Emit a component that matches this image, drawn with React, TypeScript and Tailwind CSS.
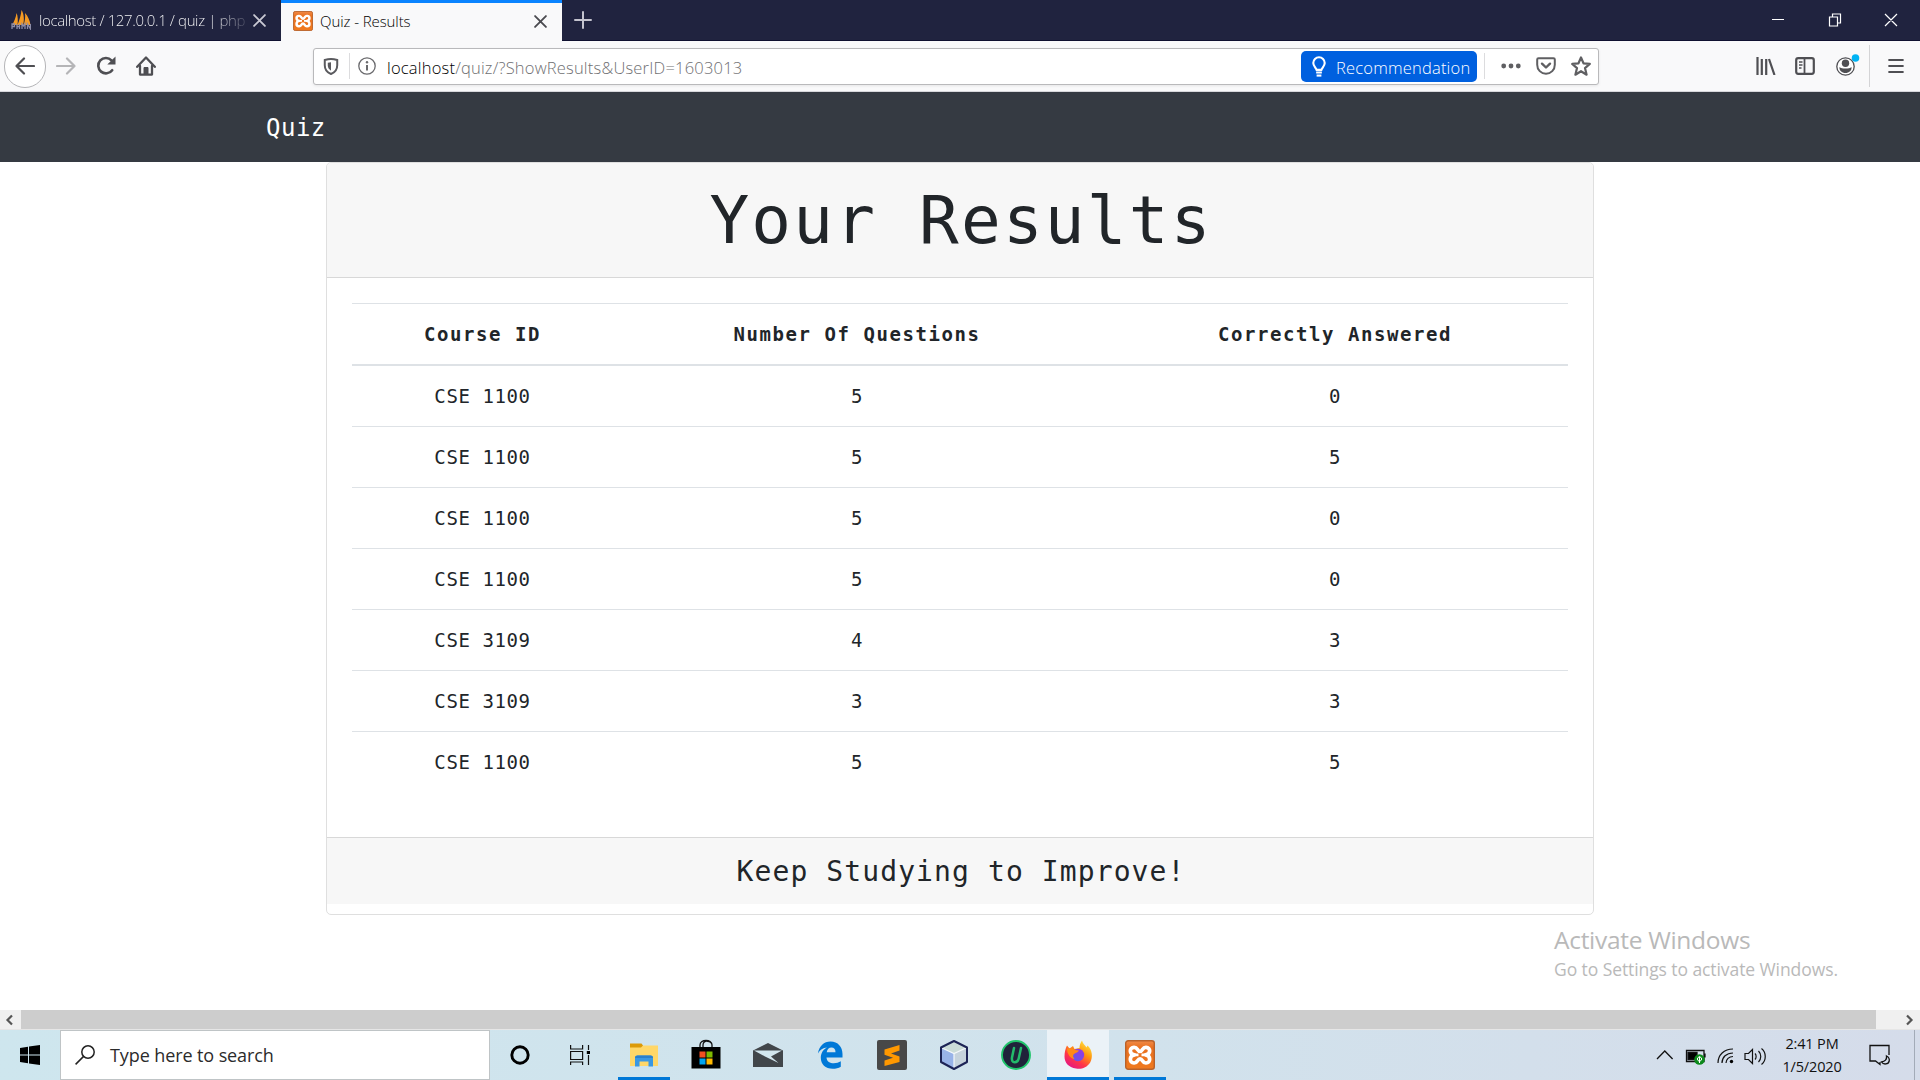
import type { ReactNode } from 'react'

const rows: [string, number, number][] = [
  ['CSE 1100', 5, 0],
  ['CSE 1100', 5, 5],
  ['CSE 1100', 5, 0],
  ['CSE 1100', 5, 0],
  ['CSE 3109', 4, 3],
  ['CSE 3109', 3, 3],
  ['CSE 1100', 5, 5],
]

function Xampp({ className }: { className: string }) {
  return (
    <svg viewBox="0 0 30 30" className={className}>
      <defs>
        <linearGradient id="xa" x1="0" y1="0" x2="0" y2="1">
          <stop offset="0" stopColor="#f08a48" />
          <stop offset="0.25" stopColor="#e9701f" />
          <stop offset="1" stopColor="#f07a1e" />
        </linearGradient>
      </defs>
      <rect x="0.7" y="0.7" width="28.6" height="28.6" rx="2.5" fill="url(#xa)" stroke="#b9622a" strokeWidth="1.4" />
      <path
        d="M9.500 14.800C4 14 4 7.500 9 7.300c3.800-.2 3.200 4.200 6 4.200s2.200-4.400 6-4.200c5 .2 5 6.700-.5 7.500 5.500.8 5.500 8 .5 8.200-3.800.2-3.200-4.200-6-4.200s-2.200 4.400-6 4.200c-5-.2-5-7.400.5-8.200Z"
        fill="none"
        stroke="#fff"
        strokeWidth="3.700"
        strokeLinejoin="round"
      />
      <path d="M9.500 14.800h4M16.500 14.800h4" stroke="#fff" strokeWidth="2.800" />
    </svg>
  )
}

function Close({ className }: { className: string }) {
  return (
    <svg viewBox="0 0 12 12" className={className} fill="none" stroke="currentColor" strokeWidth="1.700" strokeLinecap="round">
      <path d="M1 1l10 10M11 1L1 11" />
    </svg>
  )
}

function TabStrip() {
  return (
    <div className="flex h-[41px] bg-[#20233f]">
      <div className="flex w-[281px] items-center border-b border-[#0f1030] pl-[11px]">
        <svg viewBox="0 0 20 20" className="h-5 w-5 shrink-0">
          <path d="M1 15C3 12 5 7 5.500 3c1.500 3 1.500 8 1 12ZM6.500 15C8.500 10 10 5 10.500 0c2.500 4 3 10 1.500 15ZM12.500 15c1.500-4 2-8 1.500-12 3 3 5 8 5.500 12Z" fill="#f59a23" />
          <path d="M1 19v-5h2.500v2.500H1M6 19v-5M6 16.500h2.500M8.500 19v-5M11 19v-5l1.500 2 1.500-2v5M16.500 19v-5l3 5v-5" fill="none" stroke="#8c8ca8" strokeWidth="1.300" />
        </svg>
        <div className="ml-2 w-[210px] bg-gradient-to-r from-white from-82% to-transparent to-102% bg-clip-text text-[15px] leading-6 font-light tracking-[-0.380px] whitespace-nowrap text-transparent">
          localhost / 127.0.0.1 / quiz | php
        </div>
        <Close className="ml-[4px] h-[13px] w-[13px] shrink-0 text-[#c9c9d3]" />
      </div>
      <div className="flex w-[281px] items-center border-t-[3px] border-[#0a84ff] bg-[#f9f9fa] pr-[15px] pb-[2px] pl-[12px]">
        <Xampp className="h-5 w-5" />
        <span className="ml-[7px] grow text-[15px] font-light tracking-[-0.080px] text-black">Quiz - Results</span>
        <Close className="h-[13px] w-[13px] text-[#4a4a4f]" />
      </div>
      <div className="flex grow items-center border-b border-[#0f1030] pl-[12px]">
        <svg viewBox="0 0 18 18" className="h-[18px] w-[18px]" stroke="#c4c4cf" strokeWidth="2" strokeLinecap="round">
          <path d="M9 1v16M1 9h16" />
        </svg>
        <svg viewBox="0 0 128 16" className="mr-[21px] ml-auto h-4 w-32" fill="none" stroke="#fff" strokeWidth="1.200">
          <path d="M1 7.500h12M58.500 5h8v9h-8zM61.500 5V2h8v9h-3M114 2l12 12M126 2l-12 12" />
        </svg>
      </div>
    </div>
  )
}

function Toolbar() {
  return (
    <div className="flex h-[51px] items-center border-b border-[#d7d7db] bg-[#f9f9fa] text-[#4f4f53]">
      <div className="ml-1 flex h-[43px] w-[42px] items-center justify-center rounded-full border border-[#b5b5b8] bg-white">
        <svg viewBox="0 0 20 18" className="h-[18px] w-5" fill="none" stroke="currentColor" strokeWidth="2.200" strokeLinecap="round" strokeLinejoin="round">
          <path d="M19 9H1.500M9 1.500L1.500 9 9 16.500" />
        </svg>
      </div>
      <svg viewBox="0 0 20 18" className="ml-[10px] h-[18px] w-5" fill="none" stroke="#b5b5b7" strokeWidth="2.200" strokeLinecap="round" strokeLinejoin="round">
        <path d="M1 9h17.500M11 1.500L18.500 9 11 16.500" />
      </svg>
      <svg viewBox="0 0 20 20" className="ml-[20px] h-5 w-5">
        <path d="M16.200 14.200A7.700 7.700 0 1 1 15.500 4.300" fill="none" stroke="currentColor" strokeWidth="2.600" strokeLinecap="round" />
        <path d="M19.500.5v8h-8.200Z" fill="currentColor" />
      </svg>
      <svg viewBox="0 0 20 20" className="ml-[20px] h-5 w-5" fill="none" stroke="currentColor" strokeLinejoin="round" strokeLinecap="round">
        <path d="M1.200 10.800L10 1.500l8.800 9.300" strokeWidth="2.300" />
        <path d="M4 10v8.600h12V10" strokeWidth="2.300" />
        <path d="M8 18v-6.500h4V18" fill="currentColor" strokeWidth="1" />
      </svg>

      <div className="ml-[157px] flex h-[37px] w-[1286px] items-center rounded-[3px] border border-[#b9b9bb] bg-white pr-[7px] pl-[9px] shadow-[0_1px_3px_rgba(0,0,0,0.08)]">
        <svg viewBox="0 0 16 18" className="h-[17px] w-4 shrink-0">
          <path d="M8 1.100c2.200 0 4.500.4 6.600 1v5.500c0 4.500-2.500 7.700-6.600 9.300-4.100-1.600-6.600-4.800-6.600-9.300V2.100c2.100-.6 4.400-1 6.600-1Z" fill="none" stroke="#5a5a5e" strokeWidth="2.100" />
          <path d="M8 4.400c1.200 0 2.300.2 3.400.5v2.900c0 2.500-1.300 4.500-3.400 5.600Z" fill="#5a5a5e" transform="translate(16 0) scale(-1 1)" />
        </svg>
        <div className="ml-[10px] h-[26px] w-px bg-[#dcdcde]" />
        <svg viewBox="0 0 18 18" className="ml-[8px] h-[18px] w-[18px] shrink-0" fill="none" stroke="#6a6a6d">
          <circle cx="9" cy="9" r="8.200" strokeWidth="1.300" />
          <path d="M9 8v5.500" strokeWidth="2" />
          <circle cx="9" cy="5.200" r="1.200" fill="#6a6a6d" stroke="none" />
        </svg>
        <div className="ml-[11px] grow pt-[5px] text-[16.500px] font-light tracking-[0.200px] text-[#6f6f72]">
          <span className="text-black">localhost</span>/quiz/?ShowResults&amp;UserID=1603013
        </div>
        <div className="flex h-[31px] w-[176px] shrink-0 items-center rounded-[5px] bg-[#0060df] pl-[10px] text-white">
          <svg viewBox="0 0 16 22" className="h-[21px] w-4" fill="none" stroke="#fff" strokeWidth="2.200">
            <path d="M5.500 14.500C5 12.500 2 10.500 2 7.300a6 6 0 0 1 12 0c0 3.200-3 5.200-3.500 7.200ZM5 17.300h6" />
            <path d="M5.500 20.500h5" />
          </svg>
          <span className="ml-[9px] pt-[5px] text-[16.500px] font-light tracking-[0.200px]">Recommendation</span>
        </div>
        <div className="ml-[7px] h-[26px] w-px bg-[#dcdcde]" />
        <svg viewBox="0 0 20 6" className="ml-[16px] h-[6px] w-5 shrink-0" fill="#5f5f62">
          <circle cx="2.700" cy="3" r="2.400" />
          <circle cx="10" cy="3" r="2.400" />
          <circle cx="17.300" cy="3" r="2.400" />
        </svg>
        <svg viewBox="0 0 20 18" className="ml-[15px] h-[18px] w-5 shrink-0" fill="none" stroke="#5f5f62" strokeLinecap="round" strokeLinejoin="round">
          <path d="M2.500 1.200h15c.8 0 1.300.5 1.300 1.300v5.200c0 5.200-3.800 9-8.800 9s-8.800-3.800-8.800-9V2.500c0-.8.500-1.300 1.300-1.300Z" strokeWidth="2" />
          <path d="M6 6.700l4 3.800 4-3.800" strokeWidth="2.400" />
        </svg>
        <svg viewBox="0 0 20 20" className="ml-[15px] h-5 w-5 shrink-0" fill="none" stroke="#5f5f62" strokeWidth="2.200" strokeLinejoin="round">
          <path d="M10 1.500l2.500 5.800 6.300.6-4.800 4.200 1.600 6.600L10 15.200l-5.600 3.500L6 12.100 1.200 7.900l6.300-.6Z" />
        </svg>
      </div>

      <svg viewBox="0 0 20 18" className="ml-[157px] h-[18px] w-5" fill="none" stroke="currentColor" strokeWidth="2.200">
        <path d="M1.500 0v18M5.800 2v16M10.200 2v16M13 2l5.500 16" />
      </svg>
      <svg viewBox="0 0 20 18" className="ml-[19px] h-[18px] w-5" fill="none" stroke="currentColor">
        <rect x="1.200" y="1.200" width="17.600" height="15.600" rx="2" strokeWidth="2.200" />
        <path d="M9.500 1v16" strokeWidth="1.800" />
        <path d="M4 5h3.500M4 8h3.500M4 11h2.500" strokeWidth="1.300" />
      </svg>
      <svg viewBox="0 0 24 24" className="ml-[21px] h-6 w-6">
        <circle cx="9.500" cy="12.500" r="8.700" fill="#fff" stroke="#4f4f53" strokeWidth="1.300" />
        <circle cx="9.500" cy="9.200" r="3.700" fill="#4f4f53" />
        <path d="M3.500 13c2 2 10 2 12 0 .5 3.500-2.500 6-6 6s-6.500-2.500-6-6Z" fill="#4f4f53" />
        <circle cx="19.500" cy="4" r="3.800" fill="#00b3f4" />
      </svg>
      <div className="ml-[9px] h-[42px] w-px bg-[#d4d4d6]" />
      <svg viewBox="0 0 16 16" className="ml-[18px] h-4 w-4" stroke="currentColor" strokeWidth="2.200" strokeLinecap="round">
        <path d="M1.200 2h13.600M1.200 8h13.600M1.200 14h13.600" />
      </svg>
    </div>
  )
}

function Results() {
  return (
    <div className="mx-auto h-[753px] w-[1268px] overflow-hidden rounded-[5px] border border-[#dfdfdf] bg-white font-['DejaVu_Sans_Mono',monospace] text-[#212529]">
      <h1 className="flex h-[115px] items-center justify-center border-b border-[#d8d8d8] bg-[#f7f7f7] pt-[2px] pl-[2px] text-[66px] leading-none tracking-[2.200px]">
        Your Results
      </h1>
      <table className="mx-[25px] mt-[25px] w-[1216px] table-fixed border-collapse text-center">
        <thead>
          <tr className="h-[61px] border-t border-b-2 border-[#dee2e6] text-[19px] tracking-[1.550px]">
            <th className="w-[259px] pl-[2px]">Course ID</th>
            <th className="w-[491px] pl-[1px]">Number Of Questions</th>
            <th>Correctly Answered</th>
          </tr>
        </thead>
        <tbody>
          {rows.map(([course, total, correct], i) => (
            <tr key={i} className="h-[61px] border-b border-[#dee2e6] text-[19px] tracking-[0.600px] first:h-[62px] last:border-0">
              <td className="pl-[2px]">{course}</td>
              <td className="pl-[1px]">{total}</td>
              <td>{correct}</td>
            </tr>
          ))}
        </tbody>
      </table>
      <div className="mt-[44px] flex h-[67px] items-center justify-center border-t border-[#d8d8d8] bg-[#f7f7f7] pt-[2px] pl-[2px] text-[28px] tracking-[1.100px]">
        Keep Studying to Improve!
      </div>
    </div>
  )
}

function Slot({ children, open, active }: { children: ReactNode; open?: boolean; active?: boolean }) {
  return (
    <div className={active ? 'flex h-full w-[62px] flex-col items-center bg-[#ebf2f7]' : 'flex h-full w-[62px] flex-col items-center'}>
      <div className="flex grow items-center pt-[3px]">{children}</div>
      <div className={active ? 'h-[3px] w-full bg-[#0078d7]' : open ? 'h-[3px] w-[52px] bg-[#0078d7]' : 'h-[3px]'} />
    </div>
  )
}

function Taskbar() {
  return (
    <div className="flex h-[50px] items-center bg-gradient-to-r from-[#cee6ee] via-[#d1e2ec] via-60% to-[#d5dcea]">
      <div className="flex w-[60px] justify-center">
        <svg viewBox="0 0 20 20" className="h-5 w-5">
          <path d="M0 3l8-1.200V9.500H0ZM9 1.600L20 0v9.500H9ZM0 10.500h8v7.700L0 17ZM9 10.500h11V20L9 18.400Z" />
        </svg>
      </div>
      <div className="flex h-[50px] w-[430px] items-center border border-[#bfc4c6] bg-white pl-[14px]">
        <svg viewBox="0 0 20 20" className="h-5 w-5" fill="none" stroke="#222" strokeWidth="1.500">
          <circle cx="13" cy="7" r="6.200" />
          <path d="M8.600 11.400L.6 19.400" />
        </svg>
        <span className="ml-[15px] text-[18px] tracking-[-0.100px] text-[#2b2b2b]">Type here to search</span>
      </div>
      <div className="-ml-px flex h-full">
        <Slot>
          <svg viewBox="0 0 20 20" className="h-5 w-5">
            <circle cx="10" cy="10" r="8.200" fill="none" stroke="#000" strokeWidth="2.900" />
          </svg>
        </Slot>
        <Slot>
          <svg viewBox="0 0 20 20" className="mr-[4px] h-5 w-5" fill="none" stroke="#111" strokeWidth="1.200">
            <path d="M.6 0v4h12V0M.6 6.500h12v8H.6zM.6 20v-3h12v3M18.500 0v5M18.500 10v10" />
            <path d="M16.800 6h3.200v3h-3.200z" fill="#000" stroke="none" />
          </svg>
        </Slot>
        <Slot open>
          <svg viewBox="0 0 28 24" className="h-6 w-7">
            <path d="M0 2.500h28V23H0Z" fill="#ffd768" />
            <path d="M0 .5h11.500l1.500 2-2 2H0Z" fill="#dc9a08" />
            <path d="M5 23.500V15c0-1.700 1-2.500 2.500-2.500h13c1.500 0 2.500.8 2.500 2.500v8.500h-4.500v-5h-9v5Z" fill="#3a98e3" />
            <path d="M5 15c0-1.700 1-2.500 2.500-2.500h13c1.500 0 2.500.8 2.500 2.500Z" fill="#2b80cc" />
          </svg>
        </Slot>
        <Slot>
          <svg viewBox="0 0 30 30" className="mb-[2px] h-[30px] w-[30px]">
            <path d="M9 9V6c0-6 12-6 12 0v3M12 9V6c0-6 9-4 9 0" fill="none" stroke="#111" strokeWidth="1.300" />
            <path d="M.5 8h29v21.500H.5Z" />
            <path d="M8.500 12.500h6v6h-6z" fill="#f25022" />
            <path d="M15.500 12.500h6v6h-6z" fill="#7fba00" />
            <path d="M8.500 19.500h6v6h-6z" fill="#00a4ef" />
            <path d="M15.500 19.500h6v6h-6z" fill="#ffb900" />
          </svg>
        </Slot>
        <Slot>
          <svg viewBox="0 0 30 24" className="h-6 w-[30px]">
            <path d="M0 7.500L15 0l15 7.500V24H0Z" fill="#41464a" />
            <path d="M1 7.500h28L18 13.500l7.500 6.500-13.500-6.500Z" fill="#d2e6ee" />
          </svg>
        </Slot>
        <Slot>
          <svg viewBox="0 0 26 28" className="h-7 w-[26px]">
            <path
              d="M1 12.500C2 5 7 .5 13.500.5 21 .5 25.500 6 25.500 13v3.500H9.500c.3 4.300 3.500 5.800 7.300 5.800 2.700 0 5-.7 7-2v5.400c-2.300 1.400-5 2-8 2-7.500 0-12-4.500-12-11 0-4.500 2.500-8.200 6.300-10.100C5.700 7 3 8.700 1 12.500Zm8.700-1.300h8.800c0-3-1.500-4.600-4.100-4.600-2.500 0-4.200 1.800-4.700 4.600Z"
              fill="#0078d7"
              fillRule="evenodd"
            />
          </svg>
        </Slot>
        <Slot>
          <svg viewBox="0 0 30 30" className="h-[30px] w-[30px]">
            <rect width="30" height="30" rx="2" fill="#484848" />
            <path d="M22.500 5v5.500l-8.500 3 8.500 3v5.500L7.500 26v-5.500l8.500-2.700-8.500-3V9.500Z" fill="#ff9800" />
          </svg>
        </Slot>
        <Slot>
          <svg viewBox="0 0 30 30" className="h-[30px] w-[30px]">
            <path d="M15 1l13 6.500V22l-13 7L2 22V7.500Z" fill="#98b3e8" />
            <path d="M15 13.500L28 7.500V22l-13 7Z" fill="#c6d3dc" />
            <path d="M15 1l13 6.500-13 6-13-6Z" fill="#cbdcd8" />
            <path d="M15 13.500V29M2 7.500l13 6 13-6" fill="none" stroke="#f4f8fa" strokeWidth="1.200" />
            <path d="M15 1l13 6.500V22l-13 7L2 22V7.500Z" fill="none" stroke="#1d2456" strokeWidth="2" strokeLinejoin="round" />
          </svg>
        </Slot>
        <Slot>
          <svg viewBox="0 0 30 30" className="h-[30px] w-[30px]">
            <circle cx="15" cy="15" r="14" fill="#20233a" stroke="#20c56b" strokeWidth="1.900" />
            <path d="M13 8l-2 9.500c-1 6.500 5.500 6 6.700 1L20 8" fill="none" stroke="#23b96b" strokeWidth="2.500" strokeLinecap="round" />
          </svg>
        </Slot>
        <Slot active>
          <svg viewBox="0 0 30 30" className="h-[30px] w-[30px]">
            <defs>
              <linearGradient id="ff" x1="0.900" y1="0" x2="0.250" y2="1">
                <stop offset="0" stopColor="#fff44f" />
                <stop offset="0.400" stopColor="#ff980e" />
                <stop offset="0.700" stopColor="#ff3647" />
                <stop offset="1" stopColor="#e31587" />
              </linearGradient>
              <linearGradient id="fp" x1="1" y1="0" x2="0" y2="1">
                <stop offset="0" stopColor="#a033e0" />
                <stop offset="1" stopColor="#5a5ee8" />
              </linearGradient>
            </defs>
            <path d="M19 .5c.5 3 3 4.500 4.500 7l1-2c5 4.500 5.500 12 2.700 17-3.500 5.500-9.200 7-14.200 6C5.500 27.500 1.500 22.500 1.500 16.500 1.500 12.500 2.500 8 4 5.500L6.500 8.500l3.500-2.500 1.500 3 5-1C16.500 5.500 17.500 2.500 19 .5Z" fill="url(#ff)" />
            <circle cx="15" cy="15" r="6.200" fill="url(#fp)" />
            <path d="M4 8.500c3-.5 6-.5 8 1.500l4 .5c-1.500 2.500-4 2-5.500 4-1 1.500 0 3.500 1 4.500-4-.5-7.500-5-7.500-10.500Z" fill="#ff8a16" />
          </svg>
        </Slot>
        <Slot open>
          <Xampp className="h-[30px] w-[30px]" />
        </Slot>
      </div>

      <svg viewBox="0 0 110 24" className="mt-[2px] ml-[485px] h-6 w-[110px]" fill="none" stroke="#111" strokeWidth="1.300">
        <path d="M1 15l7.800-8 7.800 8" />
        <path d="M30.500 6.500h17.500v11H30.500zM49 9.500v4" />
        <path d="M32 8.500h9v7h-9z" fill="#000" />
        <circle cx="43.500" cy="15.500" r="5.300" fill="#0c8a1c" stroke="none" />
        <path d="M43.500 19v-6M41.500 16v-2l2-1.500 2 1.500v2l-2 1.500Z" stroke="#fff" strokeWidth="1" />
        <path d="M62 19C62 11 68 5 77 5M66 19c0-6 4.500-10 11-10M70 19c0-3.500 3-6.500 7-6.500" strokeWidth="1.200" />
        <circle cx="75.500" cy="17.500" r="1.700" fill="#000" stroke="none" />
        <path d="M89 9.500h3.500l4-4v14l-4-4H89ZM99 9.500c1.500 1.500 1.500 4.500 0 6M102.500 7c3 3 3 8 0 11M105.500 4.500c5 4 5 12 0 16" strokeWidth="1.200" />
      </svg>
      <div className="ml-[13px] w-[66px] text-center text-[14.500px] leading-[23px] tracking-[-0.150px] whitespace-nowrap text-[#111]">
        2:41 PM
        <br />
        1/5/2020
      </div>
      <svg viewBox="0 0 22 22" className="ml-[24px] h-[22px] w-[22px]" fill="none" stroke="#111" strokeWidth="1.300">
        <path d="M20 11V1.500H1V17h5.500L11 20.500V18" />
        <path d="M17.500 12c.5 3.500-1.500 5.500-5 6 2 3 7 2.500 7.700-1 .4-2-.7-4-2.700-5Z" />
      </svg>
      <div className="mr-[5px] ml-auto h-full w-px bg-[#a3abb8]" />
    </div>
  )
}

export default function App() {
  return (
    <div className="relative flex h-[1080px] w-[1920px] flex-col overflow-hidden bg-white font-['Open_Sans','Noto_Sans',sans-serif]">
      <TabStrip />
      <Toolbar />
      <nav className="flex h-[70px] items-center bg-[#353a42] pt-[2px] pl-[266px] font-['DejaVu_Sans_Mono',monospace] text-[24px] tracking-[0.500px] text-white">
        Quiz
      </nav>
      <main className="h-[848px]">
        <Results />
      </main>
      <div className="flex h-5 items-center border-b border-[#e6e6e6] bg-[#f0f0f0]">
        <svg viewBox="0 0 20 18" className="h-[18px] w-[21px]" fill="none" stroke="#555" strokeWidth="2.200">
          <path d="M11.500 4.500L7 9l4.500 4.500" />
        </svg>
        <div className="h-full w-[1855px] bg-[#cdcdcd]" />
        <svg viewBox="0 0 20 18" className="ml-auto h-[18px] w-[21px]" fill="none" stroke="#555" strokeWidth="2.200">
          <path d="M7.500 4.500L12 9l-4.500 4.500" />
        </svg>
      </div>
      <Taskbar />
      <div className="absolute top-[922px] left-[1554px] whitespace-nowrap text-[#b9b9b9]">
        <div className="text-[24.500px] leading-9 tracking-[-0.300px]">Activate Windows</div>
        <div className="text-[17.500px] leading-[23px] tracking-[-0.080px]">Go to Settings to activate Windows.</div>
      </div>
    </div>
  )
}
